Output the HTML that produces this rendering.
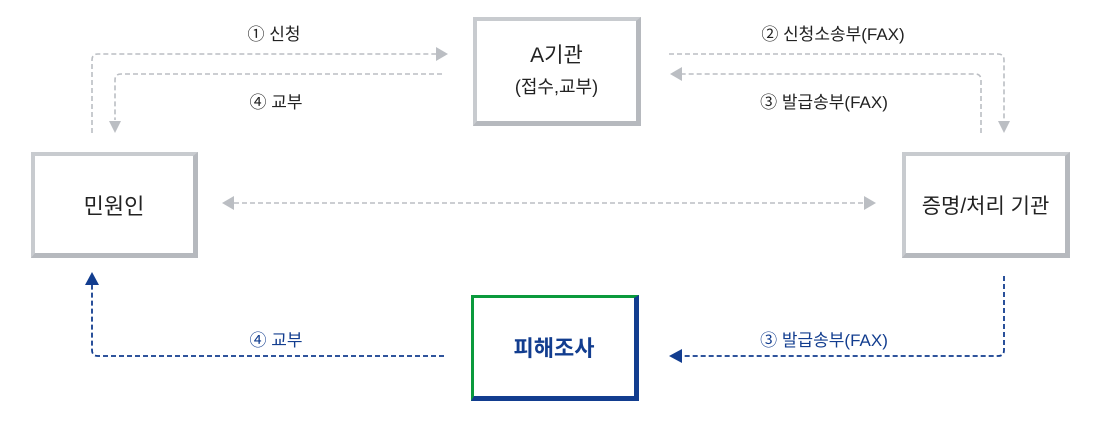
<!DOCTYPE html>
<html><head><meta charset="utf-8"><style>
body{margin:0;width:1103px;height:421px;background:#fff;position:relative;overflow:hidden;font-family:"Liberation Sans","Noto Sans CJK KR",sans-serif;color:#222}
.box{position:absolute;box-sizing:border-box;background:#fff;border-style:solid;border-color:#c8cbcf #b6b9be #b6b9be #c8cbcf;border-width:4px 5px 5px 4px;display:flex;align-items:center;justify-content:center;flex-direction:column;font-size:21px}
.lbl{position:absolute;font-size:17px;white-space:nowrap;transform:translateX(-50%)}
.b{color:#123d8f}
svg{position:absolute;left:0;top:0}
</style></head><body>
<svg width="1103" height="421">
<g fill="none" stroke="#bbbec3" stroke-width="1.6" stroke-dasharray="5 3">
<path d="M92 133 V60 Q92 54 98 54 H436"/>
<path d="M442 74 H121 Q115 74 115 80 V120"/>
<path d="M669 54 H998 Q1004 54 1004 60 V120"/>
<path d="M981 133 V80 Q981 74 975 74 H682"/>
<path d="M234 203 H864"/>
</g>
<g fill="#bbbec3">
<path d="M436 47 L448 54 L436 61Z"/>
<path d="M109 121 L121 121 L115 133Z"/>
<path d="M998 121 L1010 121 L1004 133Z"/>
<path d="M682 67 L670 74 L682 81Z"/>
<path d="M234 196 L222 203 L234 210Z"/>
<path d="M864 196 L876 203 L864 210Z"/>
</g>
<g fill="none" stroke="#123d8f" stroke-width="1.8" stroke-dasharray="5 3">
<path d="M1004 276 V350 Q1004 356 998 356 H682"/>
<path d="M444 356 H98 Q92 356 92 350 V285"/>
</g>
<g fill="#123d8f">
<path d="M682 349 L669 356 L682 363Z"/>
<path d="M85 285 L99 285 L92 272Z"/>
</g>
</svg>
<div class="box" style="left:473px;top:17px;width:168px;height:109px"><div style="font-size:21px;line-height:24px">A기관</div><div style="font-size:18px;line-height:22px;margin-top:8px">(접수,교부)</div></div>
<div class="box" style="left:31px;top:152px;width:167px;height:106px;font-size:22px">민원인</div>
<div class="box" style="left:902px;top:152px;width:168px;height:106px">증명/처리 기관</div>
<div class="box" style="left:471px;top:295px;width:168px;height:106px;border-color:#0a9a3c #123d8f #123d8f #0a9a3c;border-width:3px 5px 5px 3px;color:#123d8f;font-weight:bold;font-size:22px">피해조사</div>
<div class="lbl" style="left:274px;top:20px">① 신청</div>
<div class="lbl" style="left:276px;top:88px">④ 교부</div>
<div class="lbl" style="left:833px;top:20px">② 신청소송부(FAX)</div>
<div class="lbl" style="left:824px;top:88px">③ 발급송부(FAX)</div>
<div class="lbl b" style="left:276px;top:326px">④ 교부</div>
<div class="lbl b" style="left:824px;top:326px">③ 발급송부(FAX)</div>
</body></html>
